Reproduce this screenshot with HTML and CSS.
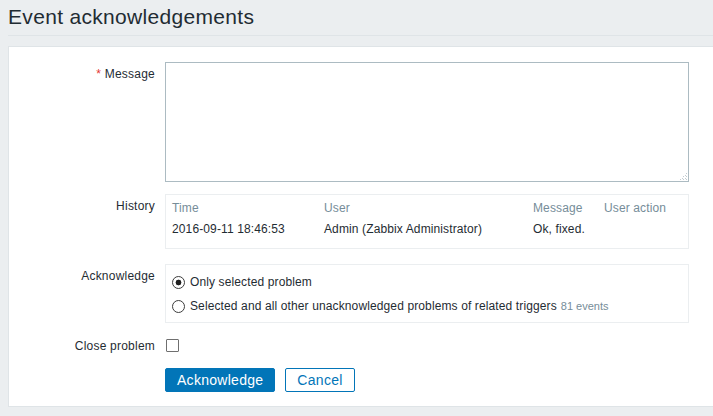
FILE: index.html
```html
<!DOCTYPE html>
<html>
<head>
<meta charset="utf-8">
<link rel="stylesheet" href="styles.css">
</head>
<body>
<header class="page-header">
  <h1 class="page-title">Event acknowledgements</h1>
</header>
<main class="panel">
  <form class="form-grid">
    <label class="form-label row-message" for="msg"><span class="asterisk">*</span> Message</label>
    <div class="form-field row-message textarea-wrap">
      <textarea id="msg" class="message-input"></textarea>
      <svg class="resize-grip" width="9" height="9" viewBox="0 0 9 9" aria-hidden="true">
        <g fill="#c3cdd2">
          <rect x="7" y="1" width="1" height="1"/>
          <rect x="4" y="4" width="1" height="1"/>
          <rect x="7" y="4" width="1" height="1"/>
          <rect x="1" y="7" width="1" height="1"/>
          <rect x="4" y="7" width="1" height="1"/>
          <rect x="7" y="7" width="1" height="1"/>
          <rect x="6" y="3" width="1" height="1"/>
          <rect x="3" y="6" width="1" height="1"/>
          <rect x="6" y="6" width="1" height="1"/>
        </g>
      </svg>
    </div>

    <div class="form-label row-history">History</div>
    <div class="form-field row-history">
      <div class="bordered-box history-box">
        <table class="history-table">
          <thead>
            <tr><th class="col-time">Time</th><th class="col-user">User</th><th class="col-msg">Message</th><th class="col-action">User action</th></tr>
          </thead>
          <tbody>
            <tr><td>2016-09-11 18:46:53</td><td>Admin (Zabbix Administrator)</td><td>Ok, fixed.</td><td></td></tr>
          </tbody>
        </table>
      </div>
    </div>

    <div class="form-label row-ack">Acknowledge</div>
    <div class="form-field row-ack">
      <ul class="bordered-box radio-list">
        <li><label class="radio-item"><input type="radio" name="scope" class="radio" checked> Only selected problem</label></li>
        <li><label class="radio-item"><input type="radio" name="scope" class="radio"> Selected and all other unacknowledged problems of related triggers <span class="grey-note">81 events</span></label></li>
      </ul>
    </div>

    <label class="form-label row-close" for="close">Close problem</label>
    <div class="form-field row-close close-field"><input type="checkbox" id="close" class="checkbox"></div>

    <div class="form-label row-buttons"></div>
    <div class="form-field row-buttons button-bar">
      <button type="button" class="btn btn-primary">Acknowledge</button>
      <button type="button" class="btn btn-alt">Cancel</button>
    </div>
  </form>
</main>
</body>
</html>
```

FILE: styles.css
```css
html, body {
  margin: 0;
  padding: 0;
}
body {
  background: #ebeef0;
  font-family: "Liberation Sans", Arial, sans-serif;
  font-size: 12px;
  line-height: 14px;
  letter-spacing: 0.12px;
  color: #1f2c33;
  overflow: hidden;
  height: 416px;
}
.page-header {
  margin-left: 8px;
  padding-top: 5px;
  padding-bottom: 6px;
  border-bottom: 1px solid #dfe4e7;
}
.page-title {
  margin: 0;
  font-size: 21px;
  line-height: 24px;
  letter-spacing: 0.32px;
  font-weight: normal;
  color: #1f2c33;
}
.panel {
  margin-top: 10px;
  margin-left: 8px;
  background: #ffffff;
  border: 1px solid #dfe4e7;
  border-right: none;
  padding: 15px 0 14px 0;
}
.form-grid {
  display: grid;
  grid-template-columns: 146px 524px;
  column-gap: 10px;
  margin: 0;
}
.form-label {
  text-align: right;
  padding-top: 5px;
  letter-spacing: 0.22px;
  color: #1f2c33;
}
.asterisk {
  color: #e33734;
}
.row-message { margin-bottom: 12px; }
.row-history { margin-bottom: 15px; }
.row-ack { margin-bottom: 11px; }
.row-close { margin-bottom: 12px; }
.close-field { height: 22px; }
.textarea-wrap {
  position: relative;
}
.message-input {
  display: block;
  box-sizing: border-box;
  width: 524px;
  height: 120px;
  margin: 0;
  border: 1px solid #acbbc2;
  border-radius: 0;
  background: #fff;
  font-family: inherit;
  font-size: 12px;
  padding: 4px 5px;
  outline: none;
  resize: none;
}
.resize-grip {
  position: absolute;
  right: 1px;
  bottom: 1px;
  display: block;
}
.bordered-box {
  box-sizing: border-box;
  width: 524px;
  border: 1px solid #ebeef0;
  margin: 0;
}
.history-box {
  padding: 3px 0 8px 0;
}
.history-table {
  border-collapse: collapse;
  width: 100%;
  table-layout: fixed;
}
.history-table th,
.history-table td {
  padding: 3px 6px 4px 6px;
  text-align: left;
  font-weight: normal;
  white-space: nowrap;
  line-height: 14px;
}
.history-table th {
  color: #768d99;
}
.col-time { width: 140px; }
.col-user { width: 197px; }
.col-msg { width: 59px; }
.radio-list {
  list-style: none;
  padding: 5px 6px 4px 6px;
}
.radio-list li {
  line-height: 24px;
  height: 24px;
}
.radio-item {
  display: flex;
  align-items: center;
  white-space: nowrap;
}
.radio {
  appearance: none;
  -webkit-appearance: none;
  width: 13px;
  height: 13px;
  margin: 0 5px 0 0;
  border: 1px solid #3c3c3c;
  border-radius: 50%;
  background: #fff;
  flex: none;
}
.radio:checked {
  background: radial-gradient(circle, #1f1f1f 0 2.6px, #ffffff 3.2px);
}
.grey-note {
  color: #768d99;
  font-size: 11px;
  letter-spacing: 0;
  margin-left: 4px;
}
.checkbox {
  appearance: none;
  -webkit-appearance: none;
  display: block;
  width: 13px;
  height: 13px;
  margin: 5px 0 0 1px;
  border: 1px solid #6f6f6f;
  border-radius: 1px;
  background: #fff;
}
.button-bar {
  display: flex;
  gap: 10px;
}
.btn {
  height: 24px;
  padding: 0 11px;
  border: 1px solid #0275b8;
  border-radius: 2px;
  font-family: inherit;
  font-size: 14px;
  line-height: 22px;
  letter-spacing: 0.28px;
  cursor: pointer;
}
.btn-primary {
  background: #0275b8;
  color: #ffffff;
}
.btn-alt {
  background: #ffffff;
  color: #0275b8;
}
```
